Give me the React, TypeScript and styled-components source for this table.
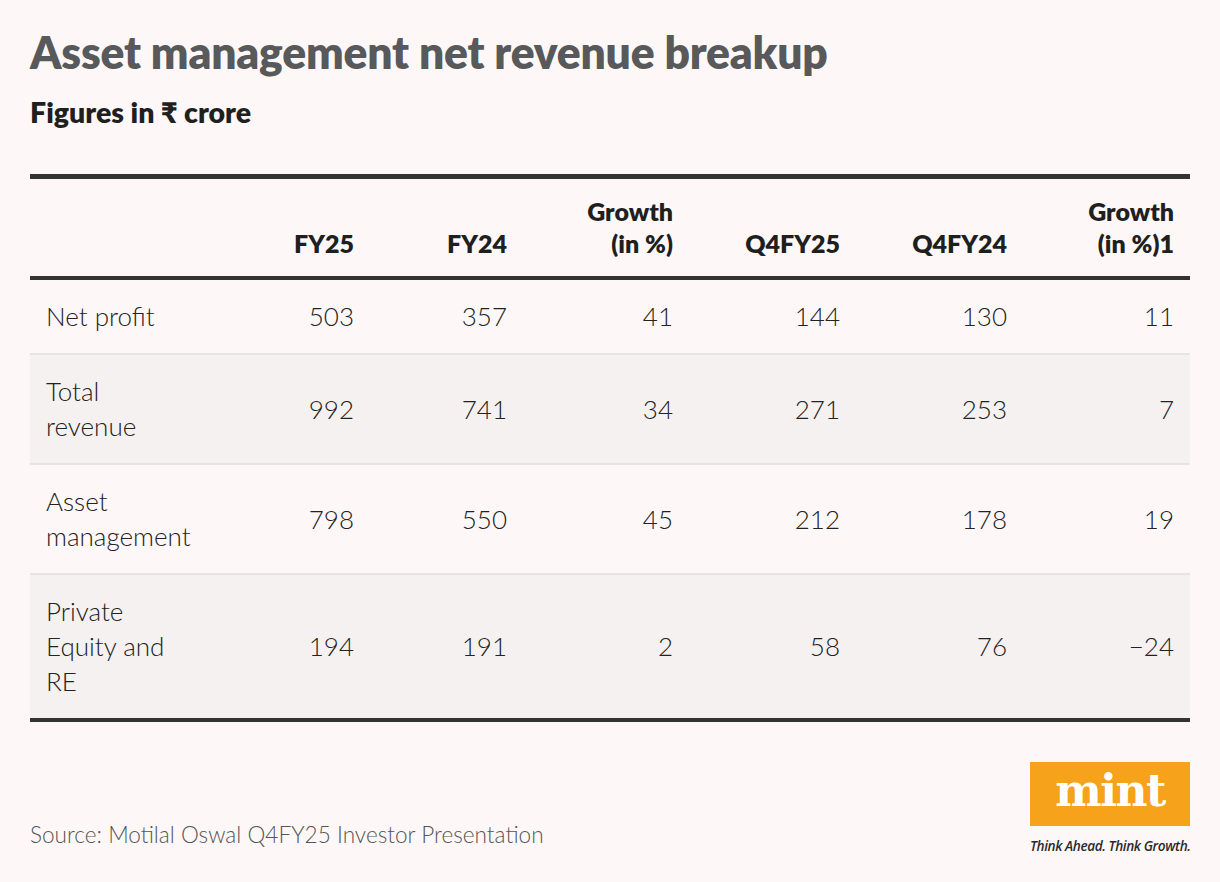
import React from 'react';
import styled, {createGlobalStyle} from 'styled-components';

const GlobalStyle = createGlobalStyle`
  html, body {
    margin: 0;
    padding: 0;
    background: #fdf8f7;
  }
  body {
    font-family: Lato, "Noto Sans", "DejaVu Sans", sans-serif;
    color: #222;
  }
`

const Page = styled.div`
  width: 1220px;
  height: 882px;
  box-sizing: border-box;
  padding: 24px 30px 0 30px;
  background: #fdf8f7;
  display: flex;
  flex-direction: column;
`

const Title = styled.h1`
  margin: 0;
  font-family: Lato, "Noto Sans", sans-serif;
  font-weight: 800;
  font-size: 44.4px;
  line-height: 56px;
  color: #58595b;
  letter-spacing: -0.2px;
`

const Subtitle = styled.h2`
  margin: 15px 0 0 0;
  font-family: Lato, "Noto Sans", "DejaVu Sans", sans-serif;
  font-weight: 800;
  font-size: 28.5px;
  line-height: 34px;
  color: #1f1f1f;
`

const Table = styled.div`
  margin-top: 45px;
  border-top: 5px solid #333;
  border-bottom: 4px solid #333;
`

const columns = '173px 167px 153px 166px 167px 167px 167px'

const HeadRow = styled.div`
  display: grid;
  grid-template-columns: ${columns};
  align-items: end;
  padding: 16px 0 17px 0;
  border-bottom: 4px solid #333;
`

const HeadCell = styled.div`
  padding-right: 16px;
  text-align: right;
  font-weight: 800;
  font-size: 25px;
  line-height: 32px;
  color: #1f1f1f;
`

const Row = styled.div<{ $shaded?: boolean; $last?: boolean }>`
  display: grid;
  grid-template-columns: ${columns};
  align-items: center;
  padding: 19px 0;
  background: ${p => p.$shaded ? '#f5f1f0' : 'transparent'};
  border-bottom: ${p => p.$last ? 'none' : '2px solid #e8e3e2'};
`

const Label = styled.div`
  padding-left: 16px;
  max-width: 124px;
  font-weight: 300;
  font-size: 26px;
  line-height: 35px;
  color: #222;
`

const Cell = styled.div`
  padding-right: 16px;
  text-align: right;
  font-weight: 300;
  font-size: 26px;
  line-height: 35px;
  color: #222;
`

const Footer = styled.div`
  margin-top: 40px;
  display: flex;
  justify-content: space-between;
  align-items: flex-start;
`

const Source = styled.div`
  margin-top: 58px;
  font-weight: 300;
  font-size: 22.6px;
  line-height: 30px;
  color: #555;
`

const Brand = styled.div`
  width: 160px;
  display: flex;
  flex-direction: column;
`

const Logo = styled.div`
  height: 64px;
  background: #f7a21b;
  display: flex;
  align-items: center;
  justify-content: center;
  color: #fff;
  font-family: "DejaVu Serif", "Liberation Serif", serif;
  font-weight: 700;
  font-size: 44px;
  letter-spacing: -1.5px;
  line-height: 1;
  padding-bottom: 6px;
  box-sizing: border-box;
`

const Tagline = styled.div`
  margin-top: 10px;
  font-family: "Open Sans", "Noto Sans", sans-serif;
  font-style: italic;
  font-weight: 600;
  font-size: 13.6px;
  letter-spacing: -0.4px;
  white-space: nowrap;
  color: #2a2a2a;
`

const heads = [['', ''], ['', 'FY25'], ['', 'FY24'], ['Growth', '(in %)'], ['', 'Q4FY25'], ['', 'Q4FY24'], ['Growth', '(in %)1']]

const rows = [
  {label: 'Net profit', values: ['503', '357', '41', '144', '130', '11']},
  {label: 'Total revenue', values: ['992', '741', '34', '271', '253', '7']},
  {label: 'Asset management', values: ['798', '550', '45', '212', '178', '19']},
  {label: 'Private Equity and RE', values: ['194', '191', '2', '58', '76', '\u221224']},
]

function App() {
  return (
    <Page>
      <GlobalStyle/>
      <Title>Asset management net revenue breakup</Title>
      <Subtitle>Figures in ₹ crore</Subtitle>
      <Table>
        <HeadRow>
          {heads.map(([a, b], i) => <HeadCell key={i}>
            {a && <div>{a}</div>}
            <div>{b}</div>
          </HeadCell>)}
        </HeadRow>
        {rows.map((r, i) => <Row key={r.label} $shaded={i % 2 === 1} $last={i === rows.length - 1}>
          <Label>{r.label}</Label>
          {r.values.map((v, j) => <Cell key={j}>{v}</Cell>)}
        </Row>)}
      </Table>
      <Footer>
        <Source>Source: Motilal Oswal Q4FY25 Investor Presentation</Source>
        <Brand>
          <Logo>mint</Logo>
          <Tagline>Think Ahead. Think Growth.</Tagline>
        </Brand>
      </Footer>
    </Page>
  )
}

export default App
